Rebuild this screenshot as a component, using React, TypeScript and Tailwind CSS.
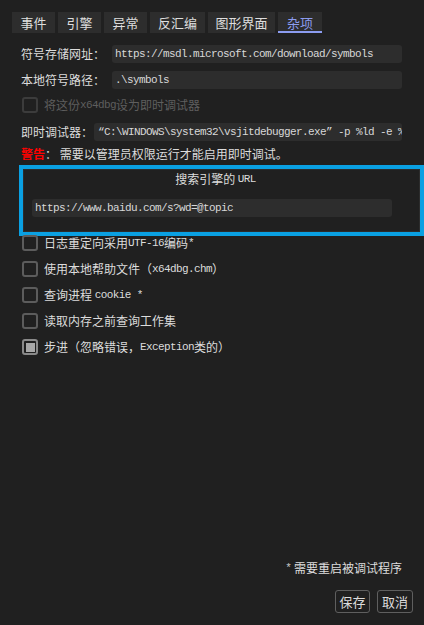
import React from "react";

const mono = "font-['Liberation_Mono',monospace] text-[11px] tracking-[-0.6px]";

function Box({ checked = false, disabled = false }: { checked?: boolean; disabled?: boolean }) {
  if (checked) {
    return (
      <div className="w-[16px] h-[16px] shrink-0 border-2 border-[#8a8a8a] rounded-[3px] flex items-center justify-center">
        <div className="w-[9px] h-[9px] bg-[#a8a8a8]" />
      </div>
    );
  }
  return (
    <div
      className={
        "w-[16px] h-[16px] shrink-0 border-2 rounded-[3px] " +
        (disabled ? "border-[#3c3c3c]" : "border-[#5c5c5c]")
      }
    />
  );
}

export default function App() {
  const tabs = [
    { t: "事件", w: "w-[43px]" },
    { t: "引擎", w: "w-[43px]" },
    { t: "异常", w: "w-[43px]" },
    { t: "反汇编", w: "w-[55px]" },
    { t: "图形界面", w: "w-[67px]" },
  ];
  return (
    <div className="w-[424px] h-[625px] bg-[#202020] flex flex-col overflow-hidden text-[12px] leading-[16px] text-[#dcdcdc] font-['Noto_Sans_CJK_SC',sans-serif]">
      {/* Tabs */}
      <div className="flex gap-[3px] pl-[12px] pt-[12px]">
        {tabs.map((x) => (
          <div
            key={x.t}
            className={"h-[21px] bg-[#2d2d2d] flex items-center justify-center text-[13px] text-[#dedede] " + x.w}
          >
            {x.t}
          </div>
        ))}
        <div className="w-[44px] h-[21px] bg-[#2d2d2d] flex items-center justify-center text-[13px] text-[#8c9cf0] border-b-2 border-[#8c9cf0] pt-[2px]">
          杂项
        </div>
      </div>

      <div className="flex flex-col pl-[21px] pr-[22px]">
        {/* Row 1 */}
        <div className="flex items-center h-[18px] mt-[12px]">
          <div className="w-[91px] shrink-0">符号存储网址：</div>
          <div className={"flex-1 h-[18px] bg-[#2d2d2d] rounded-[3px] px-[3px] flex items-center text-[#d8d8d8] " + mono}>
            https://msdl.microsoft.com/download/symbols
          </div>
        </div>
        {/* Row 2 */}
        <div className="flex items-center h-[18px] mt-[8px]">
          <div className="w-[91px] shrink-0">本地符号路径：</div>
          <div className={"flex-1 h-[18px] bg-[#2d2d2d] rounded-[3px] px-[3px] flex items-center text-[#d8d8d8] " + mono}>
            .\symbols
          </div>
        </div>
        {/* Row 3 */}
        <div className="flex items-center h-[16px] mt-[8px] pl-[1px] gap-[6px] text-[#5e5e5e]">
          <Box disabled />
          <div className="flex items-center">
            将这份<span className={mono}>x64dbg</span>设为即时调试器
          </div>
        </div>
        {/* Row 4 */}
        <div className="flex items-center h-[18px] mt-[10px]">
          <div className="w-[73px] shrink-0">即时调试器：</div>
          <div className={"flex-1 h-[18px] bg-[#2d2d2d] rounded-[3px] pl-[4px] flex items-center overflow-hidden whitespace-nowrap text-[#d8d8d8] " + mono}>
            “C:\WINDOWS\system32\vsjitdebugger.exe” -p %ld -e %ld
          </div>
        </div>
        {/* Row 5 */}
        <div className="flex items-center h-[16px] mt-[5px]">
          <span className="text-[#ff0000] font-bold">警告</span>
          <span>：&nbsp;需要以管理员权限运行才能启用即时调试。</span>
        </div>

        {/* Search engine box */}
        <div className="mt-[3px] ml-[-2px] w-[405px] h-[71px] border-4 border-[#0aa0e2] shrink-0">
          <div className="w-full h-full border border-[#2c2c2c] flex flex-col">
            <div className="mt-[1px] h-[16px] flex justify-center pr-[12px]">
              搜索引擎的&nbsp;<span className={mono}>URL</span>
            </div>
            <div className={"mt-[12px] ml-[8px] w-[360px] h-[18px] bg-[#2d2d2d] rounded-[3px] px-[3px] flex items-center text-[#d8d8d8] " + mono}>
              https://www.baidu.com/s?wd=@topic
            </div>
          </div>
        </div>

        {/* Checkboxes */}
        <div className="flex flex-col gap-[10px] mt-[-1px] pl-[1px]">
          <div className="flex items-center h-[16px] gap-[6px]">
            <Box />
            <div className="flex items-center">
              日志重定向采用<span className={mono}>UTF-16</span>编码<span className={mono}>*</span>
            </div>
          </div>
          <div className="flex items-center h-[16px] gap-[6px]">
            <Box />
            <div className="flex items-center">
              使用本地帮助文件（<span className={mono}>x64dbg.chm</span>）
            </div>
          </div>
          <div className="flex items-center h-[16px] gap-[6px]">
            <Box />
            <div className="flex items-center">
              查询进程&nbsp;<span className={mono}>cookie *</span>
            </div>
          </div>
          <div className="flex items-center h-[16px] gap-[6px]">
            <Box />
            <div>读取内存之前查询工作集</div>
          </div>
          <div className="flex items-center h-[16px] gap-[6px]">
            <Box checked />
            <div className="flex items-center">
              步进（忽略错误，<span className={mono}>Exception</span>类的）
            </div>
          </div>
        </div>
      </div>

      <div className="flex-1" />

      {/* Footnote */}
      <div className="flex justify-end items-center h-[16px] pr-[22px]">
        <span className={mono + " text-[#c8c8c8]"}>*</span>
        <span>&nbsp;需要重启被调试程序</span>
      </div>

      {/* Buttons */}
      <div className="flex justify-end gap-[7px] pr-[11px] pb-[12px] mt-[14px]">
        <div className="w-[35px] h-[23px] border border-[#5f5f5f] rounded-[3px] flex items-center justify-center text-[13px]">
          保存
        </div>
        <div className="w-[36px] h-[23px] border border-[#5f5f5f] rounded-[3px] flex items-center justify-center text-[13px]">
          取消
        </div>
      </div>
    </div>
  );
}
